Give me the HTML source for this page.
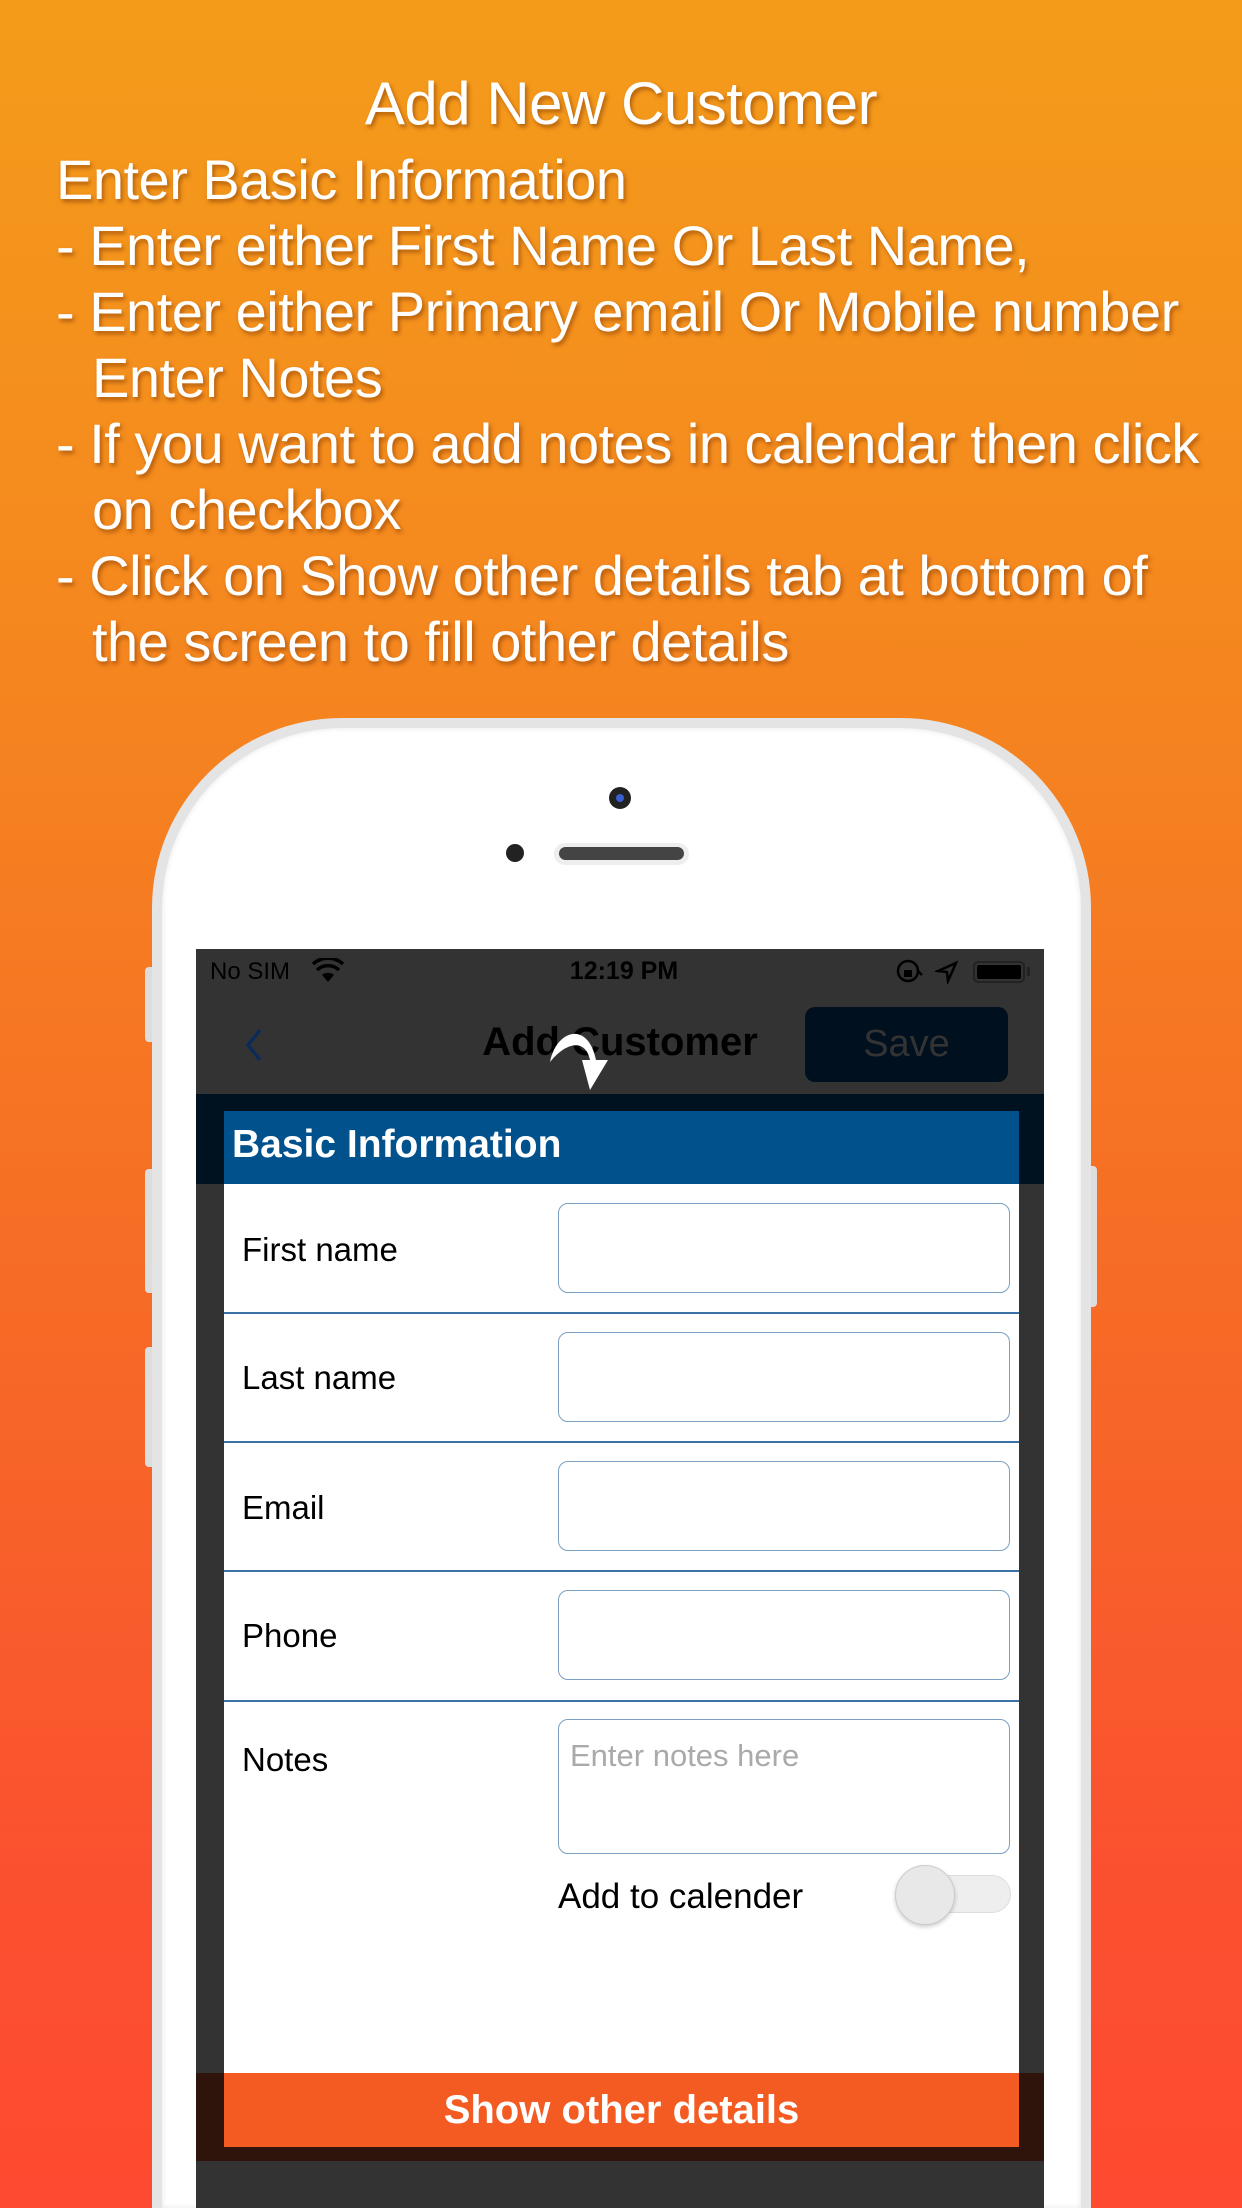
<!DOCTYPE html>
<html><head><meta charset="utf-8"><style>
*{margin:0;padding:0;box-sizing:border-box}
html,body{width:1242px;height:2208px;overflow:hidden}
body{position:relative;font-family:"Liberation Sans",sans-serif;
background:linear-gradient(180deg,#f49c1a 0%,#f5861f 30%,#f66a26 60%,#fb5030 85%,#fe4a30 100%)}
.a{position:absolute}
.hd{color:#fff;text-shadow:2px 3px 4px rgba(120,50,0,.55);white-space:nowrap;font-size:56px;letter-spacing:-0.5px;line-height:64px}
.lbl{position:absolute;left:242px;font-size:33px;color:#000;transform:translateY(-50%)}
.inp{position:absolute;left:558px;width:452px;height:90px;border:1.5px solid #7a9fc2;border-radius:10px;background:#fff}
.div{position:absolute;left:224px;width:795px;height:2px;background:#3d72a6}
</style></head><body>
<div class="a hd" style="left:0;width:1242px;text-align:center;top:70px;font-size:60px;line-height:68px">Add New Customer</div>
<div class="a hd" style="left:56px;top:148px">Enter Basic Information</div>
<div class="a hd" style="left:56px;top:214px">- Enter either First Name Or Last Name,</div>
<div class="a hd" style="left:56px;top:280px">- Enter either Primary email Or Mobile number</div>
<div class="a hd" style="left:92px;top:346px">Enter Notes</div>
<div class="a hd" style="left:56px;top:412px">- If you want to add notes in calendar then click</div>
<div class="a hd" style="left:92px;top:478px">on checkbox</div>
<div class="a hd" style="left:56px;top:544px">- Click on Show other details tab at bottom of</div>
<div class="a hd" style="left:92px;top:610px">the screen to fill other details</div>

<div class="a" style="left:145px;top:967px;width:12px;height:75px;background:#ddd;border-radius:4px"></div>
<div class="a" style="left:145px;top:1169px;width:12px;height:124px;background:#ddd;border-radius:4px"></div>
<div class="a" style="left:145px;top:1347px;width:12px;height:120px;background:#ddd;border-radius:4px"></div>
<div class="a" style="left:1085px;top:1166px;width:12px;height:141px;background:#ddd;border-radius:4px"></div>
<div class="a" style="left:152px;top:718px;width:939px;height:1490px;border-radius:190px 190px 0 0;background:#e4e4e4"></div>
<div class="a" style="left:162px;top:728px;width:919px;height:1480px;border-radius:180px 180px 0 0;background:#fff;box-shadow:inset 0 0 6px rgba(0,0,0,.1)"></div>
<div class="a" style="left:609px;top:787px;width:22px;height:22px;border-radius:50%;background:#222"><div class="a" style="left:7px;top:7px;width:8px;height:8px;border-radius:50%;background:#3a5fd0"></div></div>
<div class="a" style="left:506px;top:844px;width:18px;height:18px;border-radius:50%;background:#222"></div>
<div class="a" style="left:554px;top:843px;width:135px;height:22px;border-radius:11px;background:#eee"></div>
<div class="a" style="left:559px;top:847px;width:125px;height:13px;border-radius:7px;background:#444"></div>

<div class="a" style="left:196px;top:949px;width:848px;height:1259px;background:#333"></div>
<div class="a" style="left:210px;top:958px;font-size:24px;color:#000">No SIM</div>
<svg class="a" style="left:312px;top:958px" width="32" height="26" viewBox="0 0 32 26"><path d="M16 24 L22 17 A9 9 0 0 0 10 17Z" fill="#000"/><path d="M5 12 A16 16 0 0 1 27 12" stroke="#000" stroke-width="3.5" fill="none"/><path d="M1 6 A22 22 0 0 1 31 6" stroke="#000" stroke-width="3.5" fill="none"/></svg>
<div class="a" style="left:524px;top:957px;width:200px;text-align:center;font-size:25px;font-weight:bold;color:#000">12:19 PM</div>
<svg class="a" style="left:895px;top:958px" width="30" height="26" viewBox="0 0 30 26"><circle cx="13" cy="13" r="10" stroke="#000" stroke-width="2.5" fill="none"/><rect x="9" y="12" width="8" height="7" fill="#000"/><path d="M22 12 L27 17" stroke="#000" stroke-width="2.5"/></svg>
<svg class="a" style="left:935px;top:960px" width="24" height="24" viewBox="0 0 24 24"><path d="M3 11 L21 3 L13 21 L12 12Z" stroke="#000" stroke-width="2.5" fill="none"/></svg>
<div class="a" style="left:973px;top:961px;width:52px;height:22px;border:2px solid #222;border-radius:5px"><div style="margin:2px;height:14px;background:#000;border-radius:2px"></div></div>
<div class="a" style="left:1027px;top:967px;width:3px;height:9px;background:#222"></div>
<svg class="a" style="left:244px;top:1028px" width="20" height="34" viewBox="0 0 20 34"><path d="M16 2 L4 17 L16 32" stroke="#0d2b59" stroke-width="3.5" fill="none"/></svg>
<div class="a" style="left:400px;top:1020px;width:440px;text-align:center;font-size:40px;font-weight:bold;color:#000">Add Customer</div>
<svg class="a" style="left:548px;top:1020px" width="70" height="70" viewBox="0 0 70 70"><path d="M2 42 C8 10 40 0 48 40 L60 40 L42 70 L34 40 L42 40 C38 20 20 20 2 42Z" fill="#fff"/></svg>
<div class="a" style="left:805px;top:1007px;width:203px;height:75px;background:#00101e;border-radius:10px;color:#333;font-size:38px;text-align:center;line-height:75px">Save</div>
<div class="a" style="left:196px;top:1094px;width:848px;height:90px;background:#00111f"></div>
<div class="a" style="left:224px;top:1111px;width:795px;height:73px;background:#01518d;color:#fff;font-size:39px;font-weight:bold;line-height:68px;padding-left:8px">Basic Information</div>
<div class="a" style="left:224px;top:1184px;width:795px;height:890px;background:#fff"></div>
<div class="lbl" style="top:1250px">First name</div>
<div class="inp" style="top:1203px"></div>
<div class="div" style="top:1312px"></div>
<div class="lbl" style="top:1378px">Last name</div>
<div class="inp" style="top:1332px"></div>
<div class="div" style="top:1441px"></div>
<div class="lbl" style="top:1508px">Email</div>
<div class="inp" style="top:1461px"></div>
<div class="div" style="top:1570px"></div>
<div class="lbl" style="top:1636px">Phone</div>
<div class="inp" style="top:1590px"></div>
<div class="div" style="top:1700px"></div>
<div class="lbl" style="top:1760px">Notes</div>
<div class="inp" style="top:1719px;height:135px"></div>
<div class="a" style="left:570px;top:1738px;font-size:31px;color:#aaa">Enter notes here</div>
<div class="lbl" style="left:558px;top:1897px;font-size:35px">Add to calender</div>
<div class="a" style="left:925px;top:1875px;width:86px;height:38px;border-radius:19px;background:#eee;border:1px solid #ddd"></div>
<div class="a" style="left:895px;top:1865px;width:60px;height:60px;border-radius:50%;background:#e8e8e8;border:1.5px solid #ccc;box-shadow:0 2px 4px rgba(0,0,0,.2)"></div>
<div class="a" style="left:196px;top:2073px;width:848px;height:88px;background:#2e140a"></div>
<div class="a" style="left:224px;top:2073px;width:795px;height:74px;background:#f45b22;color:#fff;font-size:40px;font-weight:bold;text-align:center;line-height:74px">Show other details</div>
</body></html>
